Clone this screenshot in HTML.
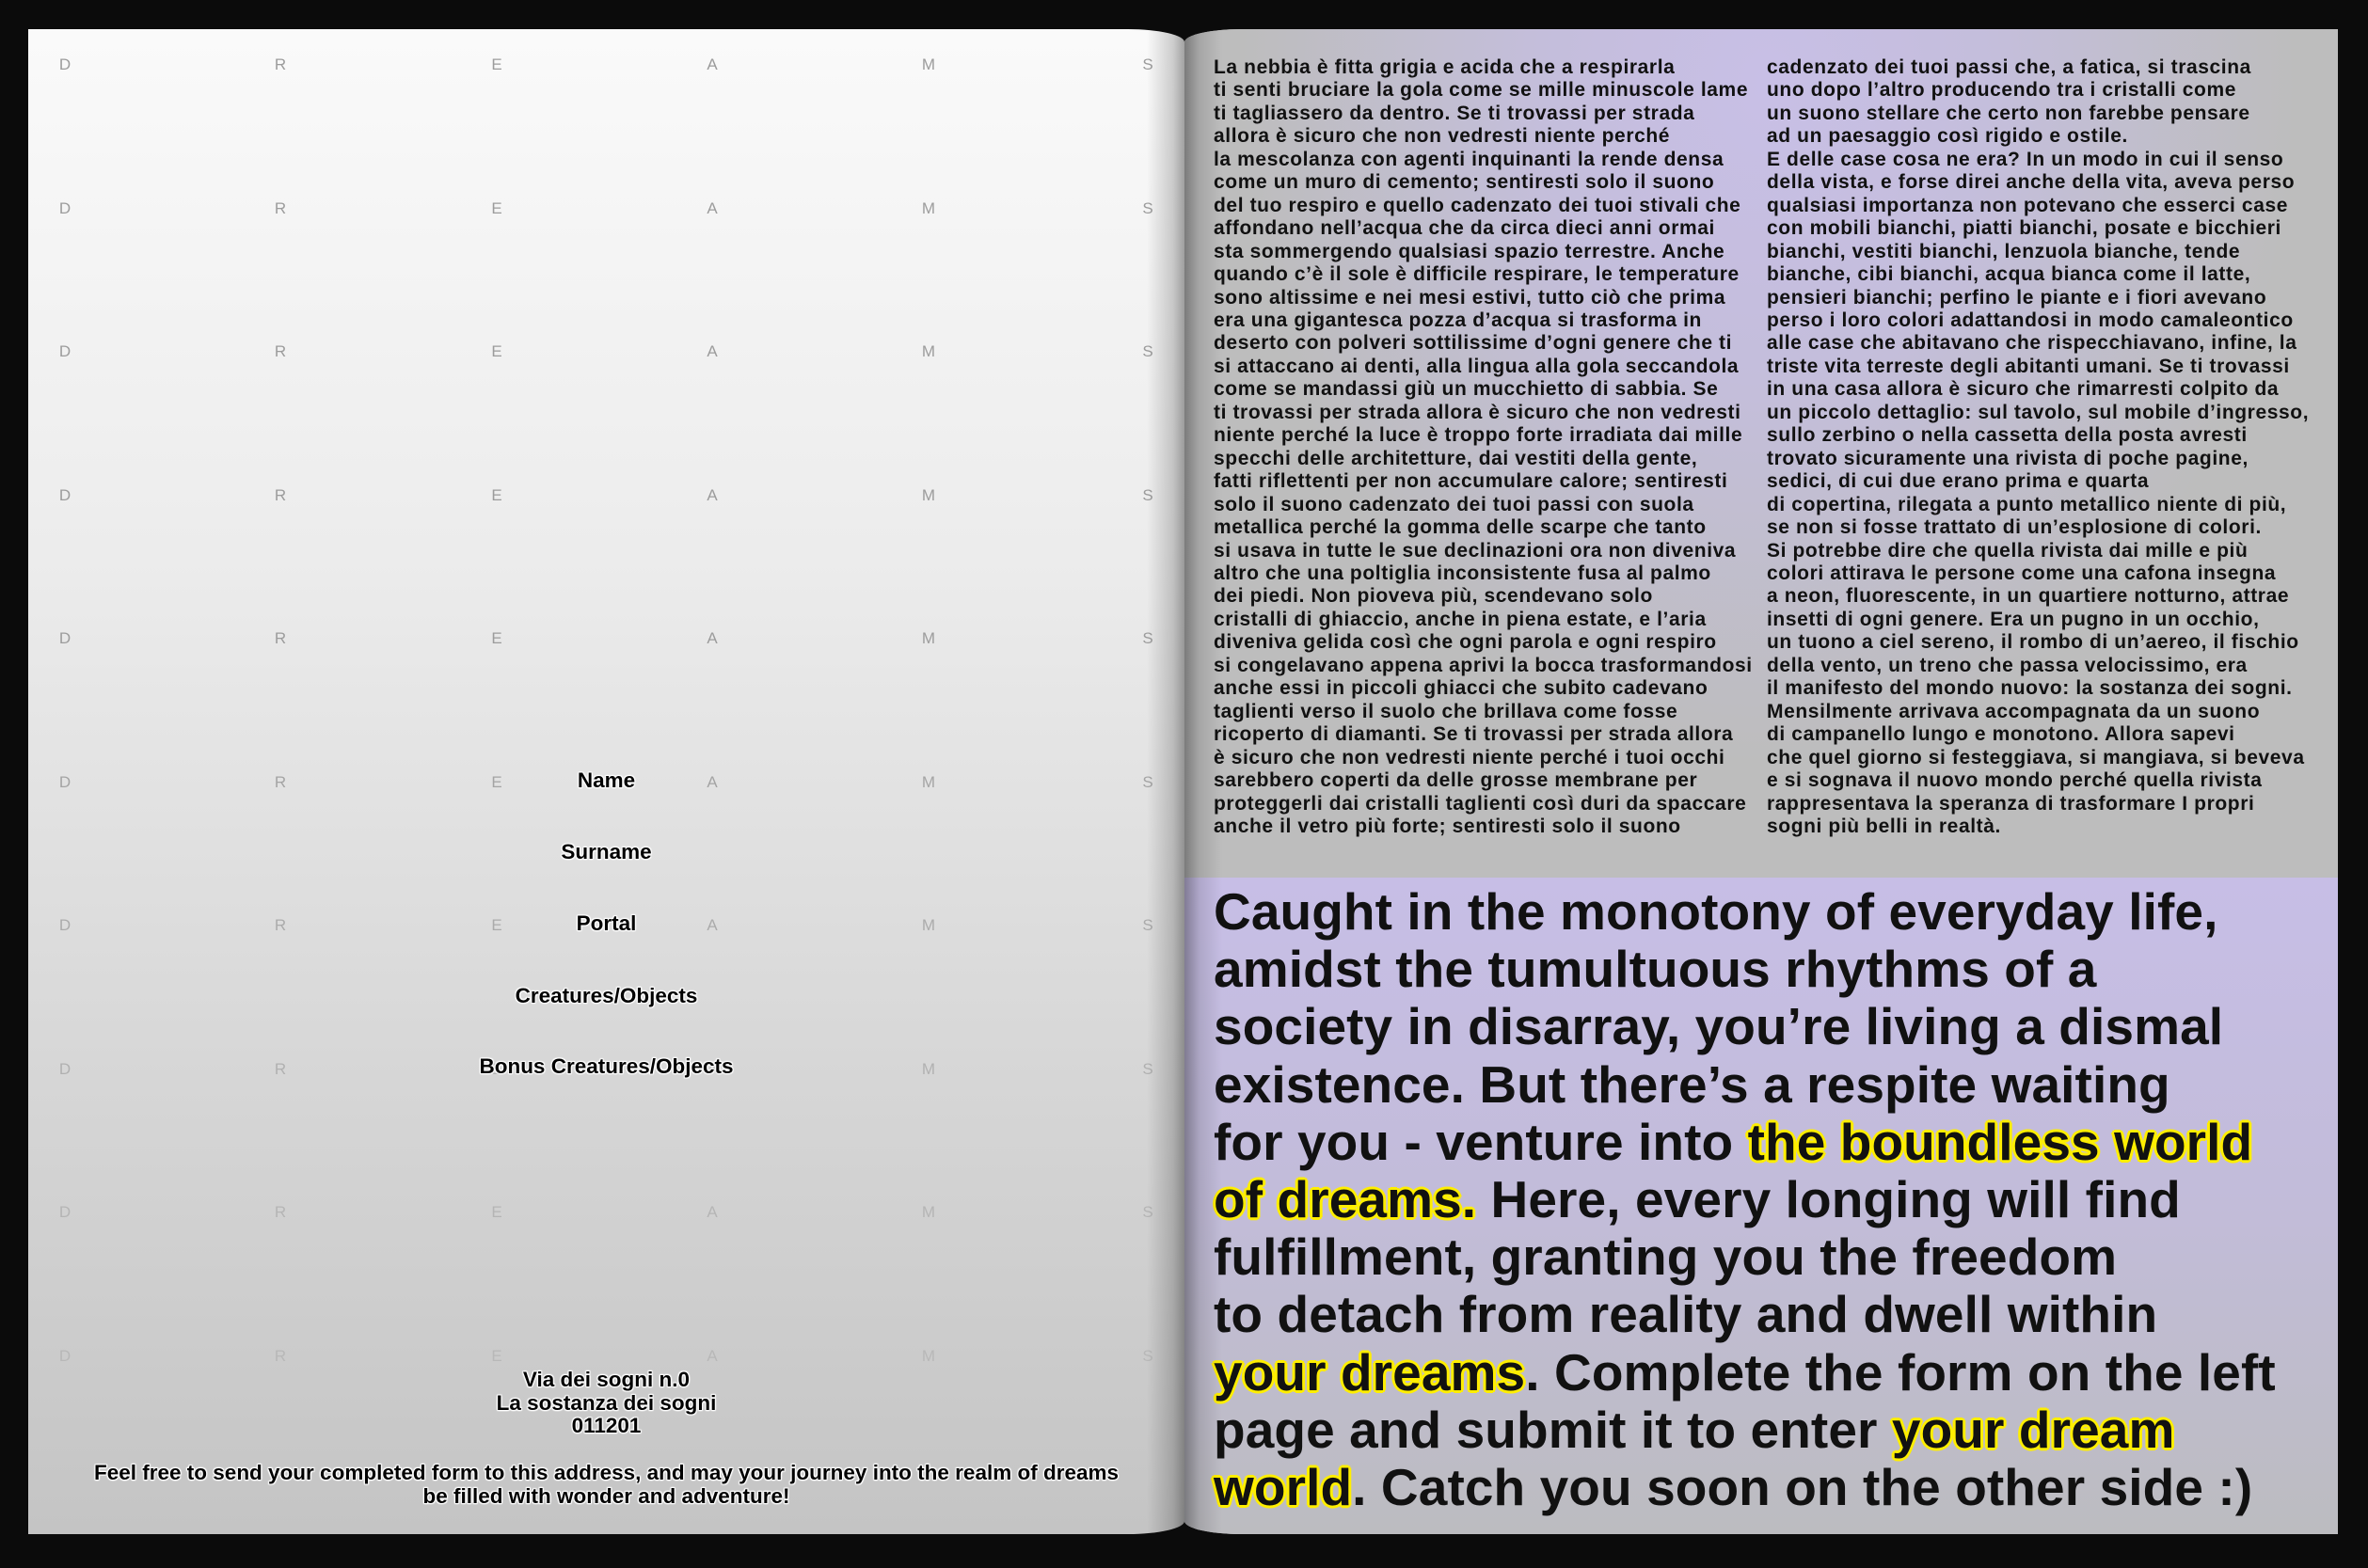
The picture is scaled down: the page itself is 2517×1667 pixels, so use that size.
<!DOCTYPE html>
<html><head><meta charset="utf-8"><style>
html,body{margin:0;padding:0;background:#0b0b0b;width:2517px;height:1667px;overflow:hidden;position:relative;font-family:"Liberation Sans",sans-serif}
.lp{position:absolute;left:30px;top:31px;width:1229px;height:1600px;background:linear-gradient(180deg,#fafafa 0%,#ececec 35%,#d6d6d6 70%,#c4c4c4 100%);border-top-right-radius:60px 14px;border-bottom-right-radius:60px 14px;overflow:hidden}
.lp:after{content:"";position:absolute;right:0;top:0;width:40px;height:100%;background:linear-gradient(90deg,rgba(0,0,0,0),rgba(0,0,0,.18) 70%,rgba(0,0,0,.35))}
.rp{position:absolute;left:1259px;top:31px;width:1226px;height:1600px;overflow:hidden;border-top-left-radius:60px 14px;border-bottom-left-radius:60px 14px;background:#bcbcbc}
.rp .top{position:absolute;left:0;top:0;width:100%;height:902px;background:radial-gradient(ellipse 700px 900px at 620px 60px,#c8bfe6 0%,#c4bedb 35%,#bdbdbd 80%)}
.rp .bot{position:absolute;left:0;top:902px;width:100%;height:698px;background:linear-gradient(180deg,#c7bee6 0%,#c2bcd9 50%,#bcbcc0 100%)}
.rp:before{content:"";position:absolute;left:0;top:0;width:40px;height:100%;z-index:2;background:linear-gradient(90deg,rgba(0,0,0,.35),rgba(0,0,0,.12) 40%,rgba(0,0,0,0))}
.d{position:absolute;font-size:17px;color:#9c9c9c;transform:translateX(-50%)}
.f{position:absolute;left:0;width:1229px;text-align:center;font-weight:bold;font-size:22.5px;color:#000;text-shadow:0 0 2px #fff,0 0 2px #fff,1px 1px 1px #fff,-1px -1px 1px #fff,1px -1px 1px #fff,-1px 1px 1px #fff;line-height:25px}
.col{position:absolute;top:29px;font-size:21px;line-height:24.45px;font-weight:bold;color:#111;white-space:nowrap;letter-spacing:0.6px}
.hl{position:absolute;left:31px;top:908px;font-size:55px;line-height:61.2px;font-weight:bold;color:#111;white-space:nowrap;letter-spacing:0.1px}
.y{text-shadow:0 0 0 #ff0,2px 0 0 #fe0,-2px 0 0 #fe0,0 2px 0 #fe0,0 -2px 0 #fe0,2px 2px 0 #fe0,-2px -2px 0 #fe0,2px -2px 0 #fe0,-2px 2px 0 #fe0,3px 0 0 #fe0,-3px 0 0 #fe0,0 3px 0 #fe0,0 -3px 0 #fe0}
</style></head><body>
<div class="lp">
<div id="grid"></div>
<div class="f" style="top:786px">Name</div>
<div class="f" style="top:862px">Surname</div>
<div class="f" style="top:938px">Portal</div>
<div class="f" style="top:1015px">Creatures/Objects</div>
<div class="f" style="top:1090px">Bonus Creatures/Objects</div>
<div class="f" style="top:1424px;line-height:24.5px">Via dei sogni n.0<br>La sostanza dei sogni<br>011201</div>
<div class="f" style="top:1523px;line-height:24.5px">Feel free to send your completed form to this address, and may your journey into the realm of dreams<br>be filled with wonder and adventure!</div>
</div>
<div class="rp">
<div class="top"></div><div class="bot"></div>
<div class="col" style="left:31px">La nebbia è fitta grigia e acida che a respirarla<br>ti senti bruciare la gola come se mille minuscole lame<br>ti tagliassero da dentro. Se ti trovassi per strada<br>allora è sicuro che non vedresti niente perché<br>la mescolanza con agenti inquinanti la rende densa<br>come un muro di cemento; sentiresti solo il suono<br>del tuo respiro e quello cadenzato dei tuoi stivali che<br>affondano nell’acqua che da circa dieci anni ormai<br>sta sommergendo qualsiasi spazio terrestre. Anche<br>quando c’è il sole è difficile respirare, le temperature<br>sono altissime e nei mesi estivi, tutto ciò che prima<br>era una gigantesca pozza d’acqua si trasforma in<br>deserto con polveri sottilissime d’ogni genere che ti<br>si attaccano ai denti, alla lingua alla gola seccandola<br>come se mandassi giù un mucchietto di sabbia. Se<br>ti trovassi per strada allora è sicuro che non vedresti<br>niente perché la luce è troppo forte irradiata dai mille<br>specchi delle architetture, dai vestiti della gente,<br>fatti riflettenti per non accumulare calore; sentiresti<br>solo il suono cadenzato dei tuoi passi con suola<br>metallica perché la gomma delle scarpe che tanto<br>si usava in tutte le sue declinazioni ora non diveniva<br>altro che una poltiglia inconsistente fusa al palmo<br>dei piedi. Non pioveva più, scendevano solo<br>cristalli di ghiaccio, anche in piena estate, e l’aria<br>diveniva gelida così che ogni parola e ogni respiro<br>si congelavano appena aprivi la bocca trasformandosi<br>anche essi in piccoli ghiacci che subito cadevano<br>taglienti verso il suolo che brillava come fosse<br>ricoperto di diamanti. Se ti trovassi per strada allora<br>è sicuro che non vedresti niente perché i tuoi occhi<br>sarebbero coperti da delle grosse membrane per<br>proteggerli dai cristalli taglienti così duri da spaccare<br>anche il vetro più forte; sentiresti solo il suono</div>
<div class="col" style="left:619px">cadenzato dei tuoi passi che, a fatica, si trascina<br>uno dopo l’altro producendo tra i cristalli come<br>un suono stellare che certo non farebbe pensare<br>ad un paesaggio così rigido e ostile.<br>E delle case cosa ne era? In un modo in cui il senso<br>della vista, e forse direi anche della vita, aveva perso<br>qualsiasi importanza non potevano che esserci case<br>con mobili bianchi, piatti bianchi, posate e bicchieri<br>bianchi, vestiti bianchi, lenzuola bianche, tende<br>bianche, cibi bianchi, acqua bianca come il latte,<br>pensieri bianchi; perfino le piante e i fiori avevano<br>perso i loro colori adattandosi in modo camaleontico<br>alle case che abitavano che rispecchiavano, infine, la<br>triste vita terreste degli abitanti umani. Se ti trovassi<br>in una casa allora è sicuro che rimarresti colpito da<br>un piccolo dettaglio: sul tavolo, sul mobile d’ingresso,<br>sullo zerbino o nella cassetta della posta avresti<br>trovato sicuramente una rivista di poche pagine,<br>sedici, di cui due erano prima e quarta<br>di copertina, rilegata a punto metallico niente di più,<br>se non si fosse trattato di un’esplosione di colori.<br>Si potrebbe dire che quella rivista dai mille e più<br>colori attirava le persone come una cafona insegna<br>a neon, fluorescente, in un quartiere notturno, attrae<br>insetti di ogni genere. Era un pugno in un occhio,<br>un tuono a ciel sereno, il rombo di un’aereo, il fischio<br>della vento, un treno che passa velocissimo, era<br>il manifesto del mondo nuovo: la sostanza dei sogni.<br>Mensilmente arrivava accompagnata da un suono<br>di campanello lungo e monotono. Allora sapevi<br>che quel giorno si festeggiava, si mangiava, si beveva<br>e si sognava il nuovo mondo perché quella rivista<br>rappresentava la speranza di trasformare I propri<br>sogni più belli in realtà.</div>
<div class="hl">Caught in the monotony of everyday life,<br>amidst the tumultuous rhythms of a<br>society in disarray, you’re living a dismal<br>existence. But there’s a respite waiting<br>for you - venture into <span class="y">the boundless world</span><br><span class="y">of dreams.</span> Here, every longing will find<br>fulfillment, granting you the freedom<br>to detach from reality and dwell within<br><span class="y">your dreams</span>. Complete the form on the left<br>page and submit it to enter <span class="y">your dream</span><br><span class="y">world</span>. Catch you soon on the other side :)</div>
</div>
<script>
var g=document.getElementById('grid'),L="DREAMS",xs=[39,268,498,727,957,1190],h='';
for(var r=0;r<10;r++){var y=28+r*152.5;var op=r<5?1:(1-(r-4)*0.12);for(var c=0;c<6;c++)h+='<div class="d" style="left:'+xs[c]+'px;top:'+y+'px;opacity:'+op+'">'+L[c]+'</div>';}
g.innerHTML=h;
</script>
</body></html>
